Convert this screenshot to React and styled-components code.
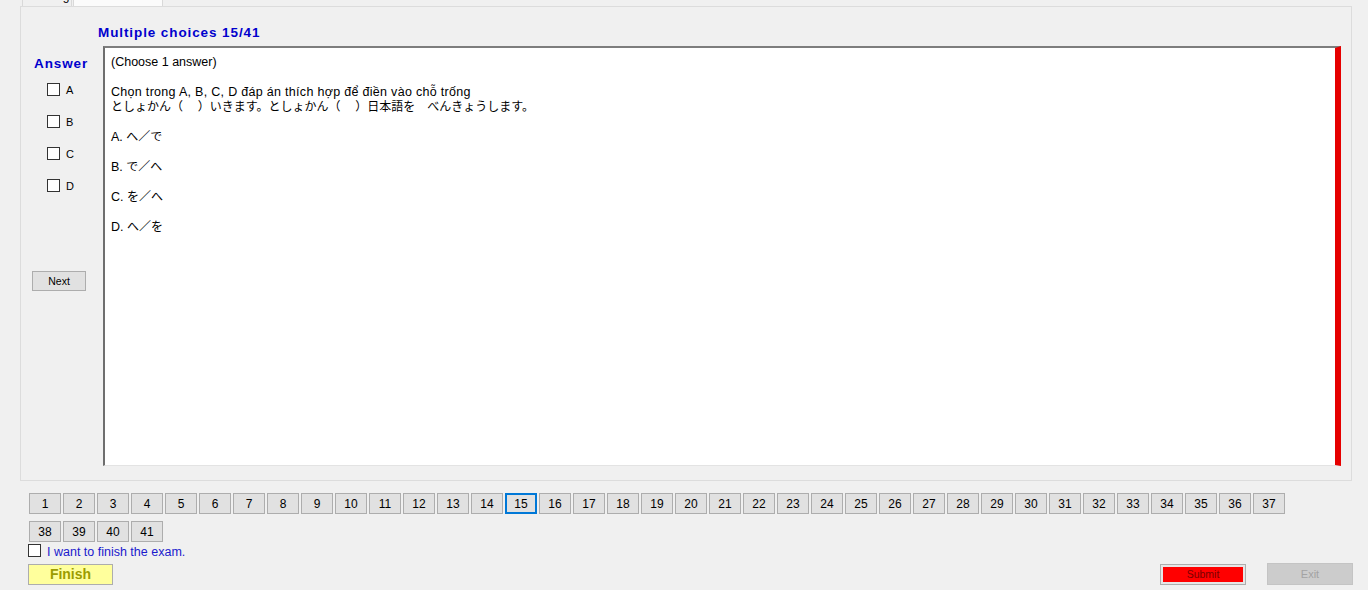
import React from 'react';
import styled, { createGlobalStyle } from 'styled-components';

const GlobalStyle = createGlobalStyle`
  html, body {
    margin: 0;
    padding: 0;
    background: #ffffff;
  }
  body {
    font-family: "Liberation Sans", Arial, "Noto Sans CJK JP", sans-serif;
    color: #000;
  }
  button {
    font-family: "Liberation Sans", Arial, sans-serif;
    padding: 0;
    cursor: pointer;
  }
`;

const Window = styled.div`
  width: 1368px;
  height: 590px;
  background: #f0f0f0;
  display: flex;
  flex-direction: column;
  overflow: hidden;
`;

const TabBar = styled.div`
  height: 6px;
  display: flex;
  align-items: flex-end;
  gap: 1px;
  padding-left: 22px;
  overflow: hidden;
`;

const Tab = styled.div`
  width: ${props => props.width}px;
  height: 20px;
  box-sizing: border-box;
  padding-top: 2px;
  border: 1px solid #d9d9d9;
  border-bottom: none;
  background: ${props => props.active ? '#fbfbfb' : '#f0f0f0'};
  font-size: 12px;
  line-height: 14px;
  text-align: center;
`;

const Panel = styled.div`
  margin-left: 20px;
  width: 1332px;
  height: 475px;
  box-sizing: border-box;
  border: 1px solid #dcdcdc;
  background: #f0f0f0;
  display: flex;
  flex-direction: column;
  padding: 17px 10px 14px 0;
`;

const Heading = styled.div`
  font-size: 13.5px;
  font-weight: bold;
  letter-spacing: 0.9px;
  line-height: 16px;
  color: #0000cd;
  margin: ${props => props.margin || '0'};
`;

const Body = styled.div`
  display: flex;
  height: 420px;
`;

const AnswerColumn = styled.div`
  width: 82px;
  display: flex;
  flex-direction: column;
  align-items: flex-start;
  padding-top: 10px;
`;

const OptionList = styled.div`
  display: flex;
  flex-direction: column;
  gap: 19px;
  margin: 11px 0 0 26px;
`;

const CheckRow = styled.label`
  display: flex;
  align-items: center;
  gap: 6px;
  height: 13px;
  font-size: ${props => props.size || 11}px;
  color: ${props => props.color || '#000'};
`;

const Box = styled.span`
  width: 13px;
  height: 13px;
  box-sizing: border-box;
  border: 1px solid #333333;
  background: #ffffff;
  flex-shrink: 0;
`;

const CheckText = styled.span`
  padding-top: 2px;
`;

const NextButton = styled.button`
  margin: 79px 0 0 11px;
  width: 54px;
  height: 20px;
  border: 1px solid #adadad;
  background: #e1e1e1;
  font-size: 10.5px;
  color: #000;
`;

const QuestionBox = styled.div`
  flex: 1;
  box-sizing: border-box;
  background: #ffffff;
  border-top: 2px solid #7d7d7d;
  border-left: 2px solid #6e6e6e;
  border-bottom: 1px solid #e3e3e3;
  border-right: 6px solid #e60000;
  padding: 7px 8px 0 6px;
  font-size: 12.5px;
  line-height: 15px;
  overflow: hidden;
`;

const Para = styled.div`
  margin-bottom: 15px;
  letter-spacing: ${props => props.spread ? '0.3px' : 'normal'};
`;

const Jp = styled.span`
  font-family: "Noto Sans CJK JP", sans-serif;
  font-size: 12px;
  line-height: 1;
  letter-spacing: normal;
`;

const NavGrid = styled.div`
  display: flex;
  flex-wrap: wrap;
  width: 1256px;
  column-gap: 2px;
  row-gap: 7px;
  margin: 12px 0 0 29px;
`;

const NavButton = styled.button`
  width: 32px;
  height: 21px;
  box-sizing: border-box;
  border: ${props => props.active ? '2px solid #0078d7' : '1px solid #adadad'};
  background: #e1e1e1;
  font-size: 12px;
  color: #000;
`;

const FinishCheck = styled.div`
  margin: 2px 0 0 28px;
`;

const Footer = styled.div`
  display: flex;
  align-items: center;
  height: 22px;
  margin-top: 6px;
  padding: 0 15px 0 28px;
`;

const FinishButton = styled.button`
  width: 85px;
  height: 21px;
  border: 1px solid #adadad;
  background: #ffff9c;
  font-size: 14px;
  font-weight: bold;
  color: #9c9c00;
`;

const SubmitButton = styled.button`
  margin-left: auto;
  width: 86px;
  height: 21px;
  border: 1px solid #adadad;
  background: #ff0000;
  box-shadow: inset 0 0 0 2px #e6e6e6;
  font-size: 10.5px;
  color: #7a0000;
`;

const ExitButton = styled.button`
  margin-left: 21px;
  width: 86px;
  height: 22px;
  border: 1px solid #c4c4c4;
  background: #cccccc;
  font-size: 11px;
  color: #a3a3a3;
`;

const options = ['A', 'B', 'C', 'D'];
const answers = [
  ['A.', 'へ／で'],
  ['B.', 'で／へ'],
  ['C.', 'を／へ'],
  ['D.', 'へ／を'],
];
const questions = Array.from({ length: 41 }, (_, i) => i + 1);

const App = () => {
  return (
    <Window>
      <GlobalStyle />
      <TabBar>
        <Tab width={50}>Reading</Tab>
        <Tab width={90} active>Grammar</Tab>
      </TabBar>

      <Panel>
        <Heading margin="1px 0 5px 77px">Multiple choices 15/41</Heading>
        <Body>
          <AnswerColumn>
            <Heading margin="0 0 0 13px">Answer</Heading>
            <OptionList>
              {options.map(o => (
                <CheckRow key={o}>
                  <Box />
                  {o}
                </CheckRow>
              ))}
            </OptionList>
            <NextButton>Next</NextButton>
          </AnswerColumn>

          <QuestionBox>
            <Para>(Choose 1 answer)</Para>
            <Para spread>
              Chọn trong A, B, C, D đáp án thích hợp để điền vào chỗ trống
              <br />
              <Jp>としょかん（　 ）いきます。としょかん（　 ）日本語を　べんきょうします。</Jp>
            </Para>
            {answers.map(([key, text]) => (
              <Para key={key}>{key} <Jp>{text}</Jp></Para>
            ))}
          </QuestionBox>
        </Body>
      </Panel>

      <NavGrid>
        {questions.map(n => (
          <NavButton key={n} active={n === 15}>{n}</NavButton>
        ))}
      </NavGrid>

      <FinishCheck>
        <CheckRow size={12.5} color="#1a1acd">
          <Box />
          <CheckText>I want to finish the exam.</CheckText>
        </CheckRow>
      </FinishCheck>

      <Footer>
        <FinishButton>Finish</FinishButton>
        <SubmitButton>Submit</SubmitButton>
        <ExitButton>Exit</ExitButton>
      </Footer>
    </Window>
  );
};

export default App;
